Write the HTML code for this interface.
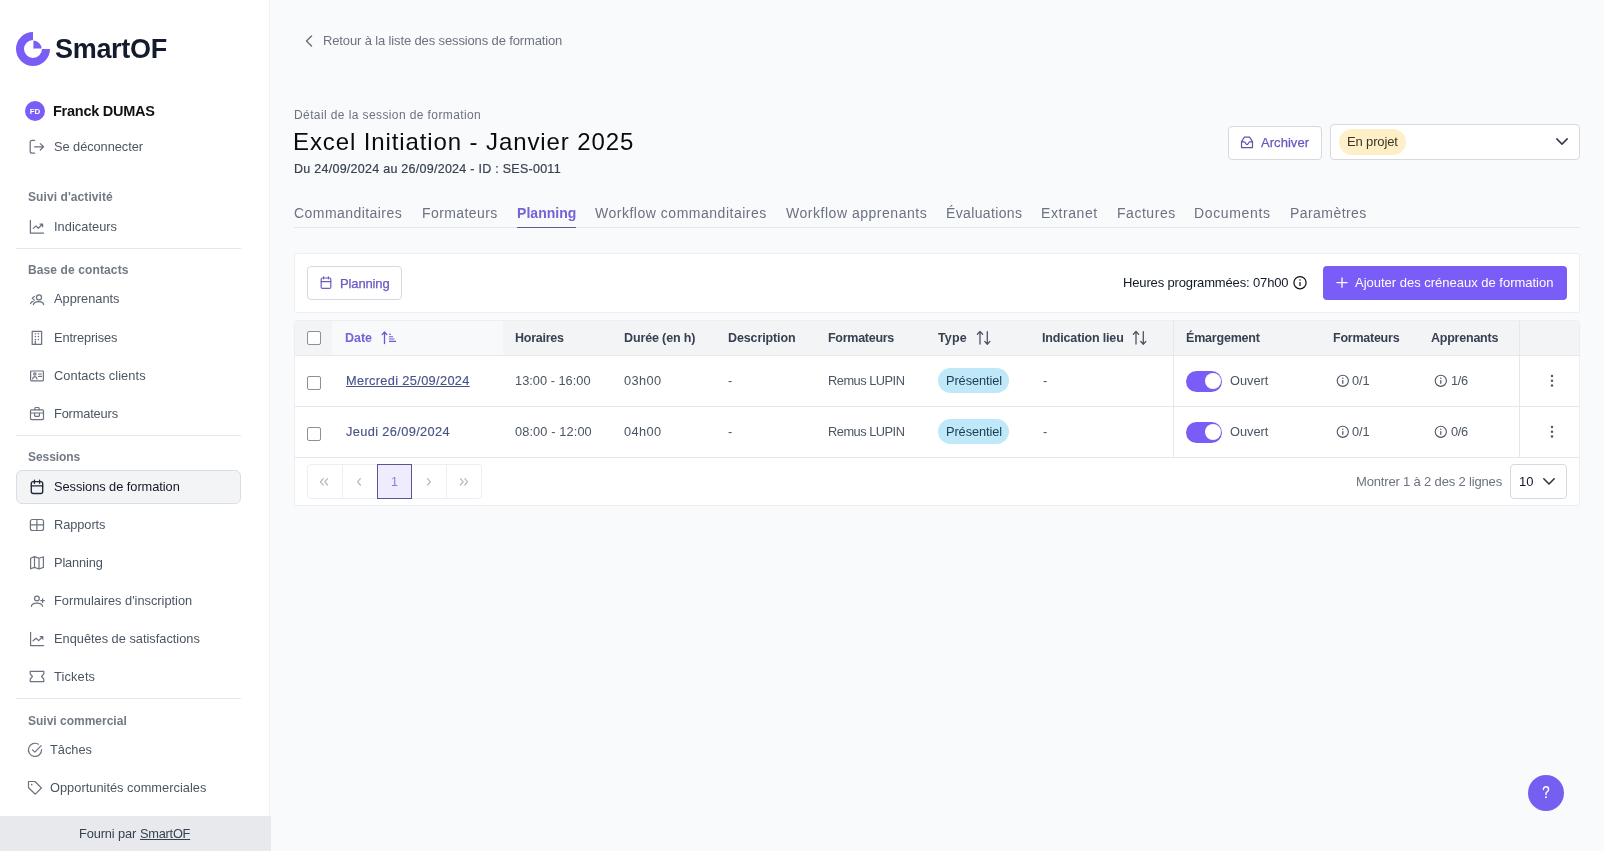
<!DOCTYPE html>
<html><head><meta charset="utf-8">
<style>
html,body{margin:0;padding:0;}
body{width:1604px;height:851px;overflow:hidden;background:#f9fafb;position:relative;font-family:"Liberation Sans",sans-serif;}
.t{position:absolute;white-space:pre;will-change:transform;}
.a{position:absolute;box-sizing:border-box;}
svg{position:absolute;overflow:visible;}
</style></head><body>
<!-- sidebar -->
<div class="a" style="left:0;top:0;width:269px;height:851px;background:#fff;"></div>
<div class="a" style="left:269px;top:0;width:1px;height:851px;background:#eef0f3;"></div>
<!-- logo -->
<svg style="left:16px;top:32px" width="34" height="34" viewBox="0 0 34 34">
  <path d="M17 0 A17 17 0 1 0 34 17 L26 17 A9 9 0 1 1 17 8 Z" fill="#7a5cf6"/>
  <path d="M17.4 8.4 A8.6 8.6 0 0 1 25.6 16.6 L17.4 16.6 Z" fill="#7a5cf6"/>
</svg>
<!-- avatar -->
<div class="a" style="left:25px;top:101px;width:20px;height:20px;border-radius:10px;background:#7a5cf6;"></div>
<div class="t" style="left:25px;top:106.5px;width:20px;text-align:center;font-size:8px;line-height:9px;font-weight:700;color:#fff;">FD</div>
<!-- sidebar dividers -->
<div class="a" style="left:16px;top:248px;width:225px;height:1px;background:#e5e7eb;"></div>
<div class="a" style="left:16px;top:435px;width:225px;height:1px;background:#e5e7eb;"></div>
<div class="a" style="left:16px;top:698px;width:225px;height:1px;background:#e5e7eb;"></div>
<!-- active nav -->
<div class="a" style="left:16px;top:470px;width:225px;height:34px;background:#f3f4f6;border:1px solid #dadde2;border-radius:6px;"></div>
<!-- footer -->
<div class="a" style="left:0;top:816px;width:271px;height:35px;background:#e8e9ed;"></div>



<svg style="left:0;top:0" width="270" height="851" viewBox="0 0 270 851">
<g fill="none" stroke="#6b7280" stroke-width="1.25" stroke-linecap="round" stroke-linejoin="round">
<!-- logout -->
<path d="M34.6 140.4 H32.2 Q30.2 140.4 30.2 142.4 V151.2 Q30.2 153.2 32.2 153.2 H34.6"/>
<path d="M34.6 146.8 H43.4 M40.3 143.6 L43.5 146.8 L40.3 150"/>
<!-- indicateurs -->
<path d="M30.4 220.4 V233.2 H43.6"/>
<path d="M33.3 228.4 L36 225.9 L38.3 228.2 L42.4 224.3 M40 224.1 H42.6 V226.7"/>
<!-- apprenants -->
<circle cx="39" cy="297.4" r="2.5"/>
<path d="M33.4 304.6 Q33.8 301.5 38.8 301.5 Q43.4 301.5 43.6 304.6"/>
<path d="M34.4 296.4 L32.3 298.3 L34.4 300.1 M30.6 303.6 Q31.2 301.6 33 301.3"/>
<!-- entreprises -->
<path d="M32.2 344.4 V331.4 H41.6 V344.4 Z"/>
<path d="M35.3 341.2 V344.4"/>
</g>
<g fill="#6b7280">
<circle cx="35.4" cy="333.7" r="0.8"/><circle cx="38.4" cy="333.7" r="0.8"/>
<circle cx="35.4" cy="336.6" r="0.8"/><circle cx="38.4" cy="336.6" r="0.8"/>
<circle cx="35.4" cy="339.5" r="0.8"/><circle cx="38.4" cy="339.5" r="0.8"/>
</g>
<g fill="none" stroke="#6b7280" stroke-width="1.2" stroke-linecap="round" stroke-linejoin="round">
<!-- contacts -->
<rect x="30.6" y="371" width="12.8" height="9.8" rx="0.8"/>
<circle cx="34.8" cy="374" r="1.2"/>
<path d="M32.6 378.8 Q33 376.6 34.8 376.6 Q36.6 376.6 37 378.8 M38.6 374 H41.4 M38.6 376.4 H41.4"/>
<!-- briefcase -->
<rect x="30.5" y="409.8" width="13" height="9.8" rx="1"/>
<path d="M34.8 409.8 V408.4 Q34.8 407.5 35.7 407.5 H38.3 Q39.2 407.5 39.2 408.4 V409.8 M30.5 413 H43.5 M34.6 413 V415.6 Q34.6 416.4 35.4 416.4 H38.6 Q39.4 416.4 39.4 415.6 V413"/>
</g>
<!-- calendar (active) -->
<g fill="none" stroke="#1f2937" stroke-width="1.35" stroke-linecap="round" stroke-linejoin="round">
<rect x="31.3" y="481.6" width="11.4" height="11.9" rx="2"/>
<path d="M31.3 485.9 H42.7 M34.4 480.2 V483.2 M39.6 480.2 V483.2"/>
</g>
<g fill="none" stroke="#6b7280" stroke-width="1.2" stroke-linecap="round" stroke-linejoin="round">
<!-- rapports -->
<rect x="30.4" y="519.5" width="13.1" height="11" rx="2"/>
<path d="M36.9 519.5 V530.5 M30.4 524.8 H43.5"/>
<!-- planning map -->
<path d="M30.6 558.2 L34.5 556.6 L39 558.2 L43.4 556.8 V567.4 L39 569 L34.5 567.4 L30.6 568.8 Z M34.5 556.6 V567.4 M39 558.2 V569"/>
<!-- user plus -->
<circle cx="36.9" cy="598.5" r="2.4"/>
<path d="M31.4 606.4 Q31.8 603.2 36.9 603.2 Q42 603.2 42.6 606.4 M42.6 598.8 V602.4 M40.8 600.6 H44.4"/>
<!-- enquetes -->
<path d="M30.6 632.4 V645.6 H43.6"/>
<path d="M33.1 640.8 L36 638.2 L38.7 640.6 L42.6 636.8 M40.2 636.6 H42.8 V639.2"/>
<!-- tickets -->
<path d="M30.2 671.4 H43.8 V673.8 L41.6 676.5 L43.8 679.2 V681.6 H30.2 V679.2 L32.4 676.5 L30.2 673.8 Z"/>
<!-- taches -->
<path d="M41.6 749.6 A6.6 6.6 0 1 1 38.4 744.2"/>
<path d="M32.4 749.8 L34.8 752.2 L41.2 745.6"/>
<!-- tag -->
<path d="M28.5 781.5 H35 L41.4 788 L35.3 794.2 L28.5 787.7 Z"/>
</g>
<circle cx="31.7" cy="784.6" r="0.85" fill="#6b7280"/>
</svg>


<!-- header -->
<svg style="left:304px;top:35px" width="10" height="12" viewBox="0 0 10 12"><path d="M7.5 1 L2.5 6 L7.5 11" fill="none" stroke="#6b7280" stroke-width="1.5" stroke-linecap="round" stroke-linejoin="round"/></svg>
<div class="a" style="left:1228px;top:126px;width:94px;height:34px;background:#fff;border:1px solid #d6d9de;border-radius:4px;"></div>
<div class="a" style="left:1330px;top:124px;width:250px;height:36px;background:#fff;border:1px solid #d6d9de;border-radius:4px;"></div>
<div class="a" style="left:1339px;top:129px;width:67px;height:26px;background:#fdf0c9;border-radius:13px;"></div>
<svg style="left:1555px;top:137px" width="14" height="9" viewBox="0 0 14 9"><path d="M1.8 1.9 L7 7.1 L12.2 1.9" fill="none" stroke="#333842" stroke-width="1.5" stroke-linecap="round" stroke-linejoin="round"/></svg>
<!-- tabs -->
<div class="a" style="left:294px;top:227px;width:1286px;height:1px;background:#e5e7eb;"></div>
<div class="a" style="left:516.5px;top:226.5px;width:59.5px;height:1.6px;background:#625e92;"></div>

<!-- toolbar card -->
<div class="a" style="left:294px;top:253px;width:1286px;height:60px;background:#fff;border:1px solid #eceef1;border-radius:3px;"></div>
<div class="a" style="left:307px;top:266px;width:95px;height:34px;background:#fff;border:1px solid #d6d9de;border-radius:4px;"></div>
<div class="a" style="left:1323px;top:266px;width:244px;height:34px;background:#7a5cf6;border-radius:4px;"></div>

<!-- table card -->
<div class="a" style="left:294px;top:320px;width:1286px;height:186px;background:#fff;border:1px solid #eceef1;border-radius:3px;"></div>
<div class="a" style="left:295px;top:321px;width:1284px;height:34px;background:#f3f4f6;border-radius:4px 4px 0 0;"></div>
<div class="a" style="left:332px;top:321px;width:171px;height:34px;background:#f8f9fb;"></div>
<div class="a" style="left:295px;top:355px;width:1284px;height:1px;background:#e5e7eb;"></div>
<div class="a" style="left:295px;top:406px;width:1284px;height:1px;background:#e5e7eb;"></div>
<div class="a" style="left:295px;top:457px;width:1284px;height:1px;background:#e5e7eb;"></div>
<div class="a" style="left:1173px;top:321px;width:1px;height:136px;background:#e5e7eb;"></div>
<div class="a" style="left:1519px;top:321px;width:1px;height:136px;background:#e5e7eb;"></div>


<!-- archiver icon -->
<svg style="left:1240px;top:136px" width="14" height="13" viewBox="0 0 14 13"><path d="M1.5 5.6 L4.4 1.2 H9.6 L12.5 5.6 V11.6 H1.5 Z M1.5 5.8 H4 Q5 5.8 5.6 7.2 Q6.2 8.6 7 8.6 Q7.8 8.6 8.4 7.2 Q9 5.8 10 5.8 H12.5" fill="none" stroke="#5e55a8" stroke-width="1.2" stroke-linejoin="round"/></svg>
<!-- planning cal icon -->
<svg style="left:320px;top:276px" width="13" height="14" viewBox="0 0 13 14"><rect x="1.2" y="2" width="9.6" height="10.4" rx="1.2" fill="none" stroke="#6a5fc0" stroke-width="1.2"/><path d="M1.2 5.6 H10.8 M3.6 0.9 V2.8 M8.4 0.9 V2.8" fill="none" stroke="#6a5fc0" stroke-width="1.2" stroke-linecap="round"/></svg>
<!-- heures info -->
<svg style="left:1292px;top:275px" width="16" height="16" viewBox="0 0 16 16"><circle cx="8" cy="7.7" r="6.1" fill="none" stroke="#111" stroke-width="1.25"/><path d="M8 7.5 V10.4" stroke="#111" stroke-width="1.25" stroke-linecap="round"/><circle cx="8" cy="4.9" r="0.75" fill="#111"/></svg>
<!-- plus -->
<svg style="left:1335px;top:276px" width="14" height="14" viewBox="0 0 14 14"><path d="M7 1.9 V11.3 M1.9 6.6 H12.1" stroke="#fff" stroke-width="1.3" stroke-linecap="round"/></svg>
<!-- header checkbox -->
<div class="a" style="left:307px;top:331px;width:14px;height:14px;border:1.3px solid #8b8f96;border-radius:2px;background:#fff;"></div>
<!-- date sort icon -->
<svg style="left:380px;top:330px" width="18" height="16" viewBox="0 0 18 16"><path d="M4.5 2.2 V13.6 M2.2 4.6 L4.5 2 L6.8 4.6" fill="none" stroke="#6a5acd" stroke-width="1.3" stroke-linecap="round" stroke-linejoin="round"/><path d="M9 4.3 H11 M9 6.7 H13 M9 9 H14.5 M9 11.4 H16" stroke="#6a5acd" stroke-width="1.1"/></svg>
<!-- type sort -->
<svg style="left:975px;top:330px" width="18" height="16" viewBox="0 0 18 16"><path d="M5 1.6 V14 M2.4 4.2 L5 1.4 L7.6 4.2 M12.3 1.6 V14 M9.7 11.4 L12.3 14.2 L14.9 11.4" fill="none" stroke="#4b5563" stroke-width="1.3" stroke-linecap="round" stroke-linejoin="round"/></svg>
<!-- lieu sort -->
<svg style="left:1131px;top:330px" width="18" height="16" viewBox="0 0 18 16"><path d="M5 1.6 V14 M2.4 4.2 L5 1.4 L7.6 4.2 M12.3 1.6 V14 M9.7 11.4 L12.3 14.2 L14.9 11.4" fill="none" stroke="#4b5563" stroke-width="1.3" stroke-linecap="round" stroke-linejoin="round"/></svg>

<div class="a" style="left:307px;top:376px;width:14px;height:14px;border:1.3px solid #8b8f96;border-radius:2px;background:#fff;"></div>
<div class="a" style="left:938.3px;top:367.9px;width:71px;height:25.3px;border-radius:12.6px;background:#bfe8f8;"></div>
<div class="a" style="left:1186px;top:371px;width:36px;height:21px;border-radius:10.5px;background:#7a5cf6;"></div>
<div class="a" style="left:1204.5px;top:373.3px;width:16px;height:16px;border-radius:8px;background:#fff;"></div>
<svg style="left:1335px;top:373px" width="16" height="16" viewBox="0 0 16 16"><circle cx="7.8" cy="7.8" r="5.6" fill="none" stroke="#4b5563" stroke-width="1.1"/><path d="M7.8 7.6 V10.3" stroke="#4b5563" stroke-width="1.2" stroke-linecap="round"/><circle cx="7.8" cy="5.3" r="0.7" fill="#4b5563"/></svg>
<svg style="left:1433px;top:373px" width="16" height="16" viewBox="0 0 16 16"><circle cx="7.8" cy="7.8" r="5.6" fill="none" stroke="#4b5563" stroke-width="1.1"/><path d="M7.8 7.6 V10.3" stroke="#4b5563" stroke-width="1.2" stroke-linecap="round"/><circle cx="7.8" cy="5.3" r="0.7" fill="#4b5563"/></svg>
<svg style="left:1548px;top:373px" width="8" height="16" viewBox="0 0 8 16"><circle cx="4" cy="3" r="1.2" fill="#4b5563"/><circle cx="4" cy="7.8" r="1.2" fill="#4b5563"/><circle cx="4" cy="12.5" r="1.2" fill="#4b5563"/></svg>

<div class="a" style="left:307px;top:427px;width:14px;height:14px;border:1.3px solid #8b8f96;border-radius:2px;background:#fff;"></div>
<div class="a" style="left:938.3px;top:418.9px;width:71px;height:25.3px;border-radius:12.6px;background:#bfe8f8;"></div>
<div class="a" style="left:1186px;top:422px;width:36px;height:21px;border-radius:10.5px;background:#7a5cf6;"></div>
<div class="a" style="left:1204.5px;top:424.3px;width:16px;height:16px;border-radius:8px;background:#fff;"></div>
<svg style="left:1335px;top:424px" width="16" height="16" viewBox="0 0 16 16"><circle cx="7.8" cy="7.8" r="5.6" fill="none" stroke="#4b5563" stroke-width="1.1"/><path d="M7.8 7.6 V10.3" stroke="#4b5563" stroke-width="1.2" stroke-linecap="round"/><circle cx="7.8" cy="5.3" r="0.7" fill="#4b5563"/></svg>
<svg style="left:1433px;top:424px" width="16" height="16" viewBox="0 0 16 16"><circle cx="7.8" cy="7.8" r="5.6" fill="none" stroke="#4b5563" stroke-width="1.1"/><path d="M7.8 7.6 V10.3" stroke="#4b5563" stroke-width="1.2" stroke-linecap="round"/><circle cx="7.8" cy="5.3" r="0.7" fill="#4b5563"/></svg>
<svg style="left:1548px;top:424px" width="8" height="16" viewBox="0 0 8 16"><circle cx="4" cy="3" r="1.2" fill="#4b5563"/><circle cx="4" cy="7.8" r="1.2" fill="#4b5563"/><circle cx="4" cy="12.5" r="1.2" fill="#4b5563"/></svg>




<!-- pagination -->
<div class="a" style="left:307px;top:464px;width:175px;height:35px;border:1px solid #eceef1;border-radius:4px;background:#fff;"></div>
<div class="a" style="left:342px;top:465px;width:1px;height:33px;background:#eceef1;"></div>
<div class="a" style="left:446px;top:465px;width:1px;height:33px;background:#eceef1;"></div>
<div class="a" style="left:377px;top:464px;width:35px;height:35px;border:1px solid #57549a;background:#efedfd;"></div>
<div class="a" style="left:1510px;top:464px;width:57px;height:35px;border:1px solid #d6d9de;border-radius:4px;background:#fff;"></div>
<svg style="left:1542px;top:477px" width="14" height="9" viewBox="0 0 14 9"><path d="M1.8 1.8 L7 7 L12.2 1.8" fill="none" stroke="#2a2f38" stroke-width="1.5" stroke-linecap="round" stroke-linejoin="round"/></svg>

<!-- help -->
<div class="a" style="left:1528px;top:775px;width:36px;height:36px;border-radius:18px;background:#755ff0;"></div>

<!-- pagination chevrons -->
<svg style="left:317px;top:475px" width="14" height="14" viewBox="0 0 14 14"><path d="M6.2 3.6 L3.4 6.8 L6.2 10 M10.6 3.6 L7.8 6.8 L10.6 10" fill="none" stroke="#b3b7bd" stroke-width="1.2" stroke-linecap="round" stroke-linejoin="round"/></svg>
<svg style="left:352px;top:475px" width="14" height="14" viewBox="0 0 14 14"><path d="M8.4 3.6 L5.6 6.8 L8.4 10" fill="none" stroke="#b3b7bd" stroke-width="1.2" stroke-linecap="round" stroke-linejoin="round"/></svg>
<svg style="left:422px;top:475px" width="14" height="14" viewBox="0 0 14 14"><path d="M5.6 3.6 L8.4 6.8 L5.6 10" fill="none" stroke="#b3b7bd" stroke-width="1.2" stroke-linecap="round" stroke-linejoin="round"/></svg>
<svg style="left:457px;top:475px" width="14" height="14" viewBox="0 0 14 14"><path d="M3.4 3.6 L6.2 6.8 L3.4 10 M7.8 3.6 L10.6 6.8 L7.8 10" fill="none" stroke="#b3b7bd" stroke-width="1.2" stroke-linecap="round" stroke-linejoin="round"/></svg>
<!-- help ? -->
<svg style="left:1538px;top:784px" width="16" height="18" viewBox="0 0 16 18"><path d="M5.4 5.6 Q5.4 2.8 8 2.8 Q10.6 2.8 10.6 5.4 Q10.6 7 9 7.8 Q8 8.4 8 9.8 V10.6" fill="none" stroke="#fff" stroke-width="1.4" stroke-linecap="round"/><circle cx="8" cy="13.2" r="0.95" fill="#fff"/></svg>
<div class='t' style='left:54.78px;top:36.44px;font-size:27px;line-height:27px;font-weight:700;color:#141b2d;letter-spacing:-0.312px;'>SmartOF</div>
<div class='t' style='left:52.75px;top:104.43px;font-size:14.5px;line-height:14.5px;font-weight:700;color:#111111;letter-spacing:-0.254px;'>Franck DUMAS</div>
<div class='t' style='left:54.12px;top:141.06px;font-size:12.8px;line-height:12.8px;font-weight:400;color:#4b5563;letter-spacing:-0.049px;'>Se déconnecter</div>
<div class='t' style='left:27.66px;top:191.34px;font-size:12px;line-height:12px;font-weight:700;color:#737985;letter-spacing:0.080px;'>Suivi d'activité</div>
<div class='t' style='left:53.92px;top:220.96px;font-size:12.8px;line-height:12.8px;font-weight:400;color:#4b5563;letter-spacing:0.041px;'>Indicateurs</div>
<div class='t' style='left:27.66px;top:264.34px;font-size:12px;line-height:12px;font-weight:700;color:#737985;letter-spacing:0.116px;'>Base de contacts</div>
<div class='t' style='left:53.92px;top:293.46px;font-size:12.8px;line-height:12.8px;font-weight:400;color:#4b5563;letter-spacing:0.000px;'>Apprenants</div>
<div class='t' style='left:53.92px;top:331.76px;font-size:12.8px;line-height:12.8px;font-weight:400;color:#4b5563;letter-spacing:-0.121px;'>Entreprises</div>
<div class='t' style='left:53.92px;top:369.66px;font-size:12.8px;line-height:12.8px;font-weight:400;color:#4b5563;letter-spacing:0.080px;'>Contacts clients</div>
<div class='t' style='left:53.92px;top:407.66px;font-size:12.8px;line-height:12.8px;font-weight:400;color:#4b5563;letter-spacing:-0.155px;'>Formateurs</div>
<div class='t' style='left:28.16px;top:451.34px;font-size:12px;line-height:12px;font-weight:700;color:#737985;letter-spacing:-0.063px;'>Sessions</div>
<div class='t' style='left:53.92px;top:480.56px;font-size:12.8px;line-height:12.8px;font-weight:400;color:#111827;letter-spacing:-0.040px;'>Sessions de formation</div>
<div class='t' style='left:53.92px;top:518.66px;font-size:12.8px;line-height:12.8px;font-weight:400;color:#4b5563;letter-spacing:-0.059px;'>Rapports</div>
<div class='t' style='left:53.92px;top:556.96px;font-size:12.8px;line-height:12.8px;font-weight:400;color:#4b5563;letter-spacing:-0.141px;'>Planning</div>
<div class='t' style='left:53.92px;top:595.06px;font-size:12.8px;line-height:12.8px;font-weight:400;color:#4b5563;letter-spacing:-0.007px;'>Formulaires d'inscription</div>
<div class='t' style='left:53.92px;top:632.86px;font-size:12.8px;line-height:12.8px;font-weight:400;color:#4b5563;letter-spacing:-0.001px;'>Enquêtes de satisfactions</div>
<div class='t' style='left:53.92px;top:670.96px;font-size:12.8px;line-height:12.8px;font-weight:400;color:#4b5563;letter-spacing:0.160px;'>Tickets</div>
<div class='t' style='left:27.96px;top:714.74px;font-size:12px;line-height:12px;font-weight:700;color:#737985;letter-spacing:0.000px;'>Suivi commercial</div>
<div class='t' style='left:50.32px;top:743.96px;font-size:12.8px;line-height:12.8px;font-weight:400;color:#4b5563;letter-spacing:0.000px;'>Tâches</div>
<div class='t' style='left:49.92px;top:781.66px;font-size:12.8px;line-height:12.8px;font-weight:400;color:#4b5563;letter-spacing:0.023px;'>Opportunités commerciales</div>
<div class='t' style='left:322.72px;top:33.70px;font-size:13px;line-height:13px;font-weight:400;color:#6b7280;letter-spacing:-0.134px;'>Retour à la liste des sessions de formation</div>
<div class='t' style='left:293.86px;top:109.34px;font-size:12px;line-height:12px;font-weight:400;color:#6b7280;letter-spacing:0.396px;'>Détail de la session de formation</div>
<div class='t' style='left:293.32px;top:129.98px;font-size:24px;line-height:24px;font-weight:400;color:#0b0b0f;letter-spacing:0.894px;'>Excel Initiation - Janvier 2025</div>
<div class='t' style='left:293.84px;top:162.92px;font-size:12.5px;line-height:12.5px;font-weight:400;color:#374151;letter-spacing:0.264px;-webkit-text-stroke:0.2px #374151;'>Du 24/09/2024 au 26/09/2024 - ID : SES-0011</div>
<div class='t' style='left:293.77px;top:205.75px;font-size:14px;line-height:14px;font-weight:400;color:#6b7280;letter-spacing:0.445px;'>Commanditaires</div>
<div class='t' style='left:421.57px;top:205.75px;font-size:14px;line-height:14px;font-weight:400;color:#6b7280;letter-spacing:0.405px;'>Formateurs</div>
<div class='t' style='left:516.57px;top:205.75px;font-size:14px;line-height:14px;font-weight:700;color:#7362d8;letter-spacing:0.042px;'>Planning</div>
<div class='t' style='left:595.17px;top:205.75px;font-size:14px;line-height:14px;font-weight:400;color:#6b7280;letter-spacing:0.514px;'>Workflow commanditaires</div>
<div class='t' style='left:785.67px;top:205.75px;font-size:14px;line-height:14px;font-weight:400;color:#6b7280;letter-spacing:0.526px;'>Workflow apprenants</div>
<div class='t' style='left:946.17px;top:205.75px;font-size:14px;line-height:14px;font-weight:400;color:#6b7280;letter-spacing:0.363px;'>Évaluations</div>
<div class='t' style='left:1041.27px;top:205.75px;font-size:14px;line-height:14px;font-weight:400;color:#6b7280;letter-spacing:0.583px;'>Extranet</div>
<div class='t' style='left:1117.27px;top:205.75px;font-size:14px;line-height:14px;font-weight:400;color:#6b7280;letter-spacing:0.536px;'>Factures</div>
<div class='t' style='left:1194.47px;top:205.75px;font-size:14px;line-height:14px;font-weight:400;color:#6b7280;letter-spacing:0.651px;'>Documents</div>
<div class='t' style='left:1289.57px;top:205.75px;font-size:14px;line-height:14px;font-weight:400;color:#6b7280;letter-spacing:0.440px;'>Paramètres</div>
<div class='t' style='left:1261.21px;top:135.70px;font-size:13px;line-height:13px;font-weight:400;color:#6559c0;letter-spacing:0.050px;-webkit-text-stroke:0.25px #6559c0;'>Archiver</div>
<div class='t' style='left:1346.62px;top:135.30px;font-size:13px;line-height:13px;font-weight:400;color:#3d3422;letter-spacing:-0.151px;'>En projet</div>
<div class='t' style='left:339.81px;top:276.50px;font-size:13px;line-height:13px;font-weight:400;color:#6559c0;letter-spacing:-0.138px;-webkit-text-stroke:0.25px #6559c0;'>Planning</div>
<div class='t' style='left:1122.91px;top:275.50px;font-size:13px;line-height:13px;font-weight:400;color:#111827;letter-spacing:-0.148px;'>Heures programmées: 07h00</div>
<div class='t' style='left:1355.41px;top:275.50px;font-size:13px;line-height:13px;font-weight:400;color:#ffffff;letter-spacing:-0.009px;'>Ajouter des créneaux de formation</div>
<div class='t' style='left:344.84px;top:331.92px;font-size:12.5px;line-height:12.5px;font-weight:700;color:#7264d8;letter-spacing:-0.031px;'>Date</div>
<div class='t' style='left:514.84px;top:331.92px;font-size:12.5px;line-height:12.5px;font-weight:700;color:#374151;letter-spacing:-0.248px;'>Horaires</div>
<div class='t' style='left:624.34px;top:331.92px;font-size:12.5px;line-height:12.5px;font-weight:700;color:#374151;letter-spacing:-0.131px;'>Durée (en h)</div>
<div class='t' style='left:728.44px;top:331.92px;font-size:12.5px;line-height:12.5px;font-weight:700;color:#374151;letter-spacing:-0.117px;'>Description</div>
<div class='t' style='left:827.74px;top:331.92px;font-size:12.5px;line-height:12.5px;font-weight:700;color:#374151;letter-spacing:-0.276px;'>Formateurs</div>
<div class='t' style='left:937.74px;top:331.92px;font-size:12.5px;line-height:12.5px;font-weight:700;color:#374151;letter-spacing:0.117px;'>Type</div>
<div class='t' style='left:1042.04px;top:331.92px;font-size:12.5px;line-height:12.5px;font-weight:700;color:#374151;letter-spacing:-0.160px;'>Indication lieu</div>
<div class='t' style='left:1185.74px;top:331.92px;font-size:12.5px;line-height:12.5px;font-weight:700;color:#374151;letter-spacing:-0.204px;'>Émargement</div>
<div class='t' style='left:1332.64px;top:331.92px;font-size:12.5px;line-height:12.5px;font-weight:700;color:#374151;letter-spacing:-0.242px;'>Formateurs</div>
<div class='t' style='left:1431.34px;top:331.92px;font-size:12.5px;line-height:12.5px;font-weight:700;color:#374151;letter-spacing:-0.228px;'>Apprenants</div>
<div class='t' style='left:345.92px;top:374.66px;font-size:12.8px;line-height:12.8px;font-weight:400;color:#47548a;letter-spacing:0.335px;-webkit-text-stroke:0.15px #47548a;text-decoration:underline;text-underline-offset:1px;'>Mercredi 25/09/2024</div>
<div class='t' style='left:514.82px;top:374.66px;font-size:12.8px;line-height:12.8px;font-weight:400;color:#4b5563;letter-spacing:0.009px;'>13:00 - 16:00</div>
<div class='t' style='left:624.32px;top:374.66px;font-size:12.8px;line-height:12.8px;font-weight:400;color:#4b5563;letter-spacing:0.383px;'>03h00</div>
<div class='t' style='left:728.42px;top:374.66px;font-size:12.8px;line-height:12.8px;font-weight:400;color:#4b5563;letter-spacing:0.000px;'>-</div>
<div class='t' style='left:827.72px;top:374.66px;font-size:12.8px;line-height:12.8px;font-weight:400;color:#4b5563;letter-spacing:-0.486px;'>Remus LUPIN</div>
<div class='t' style='left:946.12px;top:374.66px;font-size:12.8px;line-height:12.8px;font-weight:400;color:#1b3c52;letter-spacing:-0.087px;'>Présentiel</div>
<div class='t' style='left:1042.72px;top:374.66px;font-size:12.8px;line-height:12.8px;font-weight:400;color:#4b5563;letter-spacing:0.000px;'>-</div>
<div class='t' style='left:1230.22px;top:374.66px;font-size:12.8px;line-height:12.8px;font-weight:400;color:#4b5563;letter-spacing:-0.016px;'>Ouvert</div>
<div class='t' style='left:1352.32px;top:374.66px;font-size:12.8px;line-height:12.8px;font-weight:400;color:#4b5563;letter-spacing:-0.086px;'>0/1</div>
<div class='t' style='left:1451.12px;top:374.66px;font-size:12.8px;line-height:12.8px;font-weight:400;color:#4b5563;letter-spacing:-0.336px;'>1/6</div>
<div class='t' style='left:345.92px;top:425.66px;font-size:12.8px;line-height:12.8px;font-weight:400;color:#47548a;letter-spacing:0.361px;-webkit-text-stroke:0.15px #47548a;'>Jeudi 26/09/2024</div>
<div class='t' style='left:514.82px;top:425.66px;font-size:12.8px;line-height:12.8px;font-weight:400;color:#4b5563;letter-spacing:0.109px;'>08:00 - 12:00</div>
<div class='t' style='left:624.32px;top:425.66px;font-size:12.8px;line-height:12.8px;font-weight:400;color:#4b5563;letter-spacing:0.383px;'>04h00</div>
<div class='t' style='left:728.42px;top:425.66px;font-size:12.8px;line-height:12.8px;font-weight:400;color:#4b5563;letter-spacing:0.000px;'>-</div>
<div class='t' style='left:827.72px;top:425.66px;font-size:12.8px;line-height:12.8px;font-weight:400;color:#4b5563;letter-spacing:-0.486px;'>Remus LUPIN</div>
<div class='t' style='left:946.12px;top:425.66px;font-size:12.8px;line-height:12.8px;font-weight:400;color:#1b3c52;letter-spacing:-0.087px;'>Présentiel</div>
<div class='t' style='left:1042.72px;top:425.66px;font-size:12.8px;line-height:12.8px;font-weight:400;color:#4b5563;letter-spacing:0.000px;'>-</div>
<div class='t' style='left:1230.22px;top:425.66px;font-size:12.8px;line-height:12.8px;font-weight:400;color:#4b5563;letter-spacing:-0.016px;'>Ouvert</div>
<div class='t' style='left:1352.32px;top:425.66px;font-size:12.8px;line-height:12.8px;font-weight:400;color:#4b5563;letter-spacing:-0.086px;'>0/1</div>
<div class='t' style='left:1451.12px;top:425.66px;font-size:12.8px;line-height:12.8px;font-weight:400;color:#4b5563;letter-spacing:-0.336px;'>0/6</div>
<div class='t' style='left:391.44px;top:475.92px;font-size:12.5px;line-height:12.5px;font-weight:400;color:#8a7fe0;letter-spacing:0.000px;'>1</div>
<div class='t' style='left:1355.62px;top:475.20px;font-size:13px;line-height:13px;font-weight:400;color:#6b7280;letter-spacing:-0.167px;'>Montrer 1 à 2 des 2 lignes</div>
<div class='t' style='left:1519.01px;top:474.80px;font-size:13px;line-height:13px;font-weight:400;color:#111827;letter-spacing:0.000px;'>10</div>
<div class='t' style='left:79.42px;top:827.66px;font-size:12.8px;line-height:12.8px;font-weight:400;color:#374151;letter-spacing:-0.123px;'>Fourni par</div>
<div class='t' style='left:139.72px;top:827.66px;font-size:12.8px;line-height:12.8px;font-weight:400;color:#374151;letter-spacing:-0.247px;text-decoration:underline;text-underline-offset:1px;'>SmartOF</div>
</body></html>
